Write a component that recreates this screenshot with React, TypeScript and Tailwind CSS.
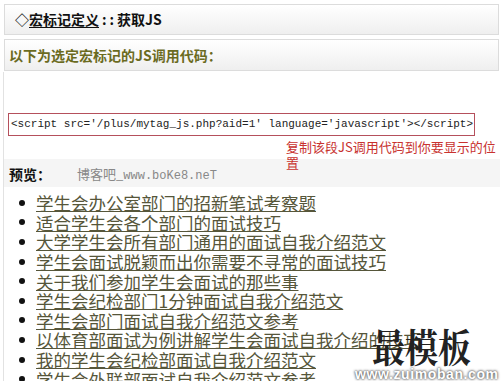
import React from "react";

const items = [
  "学生会办公室部门的招新笔试考察题",
  "适合学生会各个部门的面试技巧",
  "大学学生会所有部门通用的面试自我介绍范文",
  "学生会面试脱颖而出你需要不寻常的面试技巧",
  "关于我们参加学生会面试的那些事",
  "学生会纪检部门1分钟面试自我介绍范文",
  "学生会部门面试自我介绍范文参考",
  "以体育部面试为例讲解学生会面试自我介绍的技巧",
  "我的学生会纪检部面试自我介绍范文",
  "学生会外联部面试自我介绍范文参考",
];

const cjk = { fontFamily: '"Noto Sans CJK SC", "Noto Sans", sans-serif' };

export default function App() {
  return (
    <div className="relative w-[503px] h-[381px] overflow-hidden bg-white" style={cjk}>
      <div className="pt-[4px] px-[3px]">
        <div className="h-[31px] mx-[1px] flex items-center pl-[10px] border border-[#dcdcdc] bg-gradient-to-b from-white to-[#efefef] text-[14px] font-bold text-[#111]">
          <span>◇</span>
          <span className="underline underline-offset-2">宏标记定义</span>
          <span className="ml-[3px] tracking-[3px]">::</span>
          <span>获取JS</span>
        </div>
        <div className="mt-[4px] h-[32px] mx-[1px] flex items-center pl-[4px] border border-[#dcdcdc] bg-gradient-to-b from-white to-[#efefef] text-[14px] font-bold text-[#6b6b1f]">
          以下为选定宏标记的JS调用代码：
        </div>
        <div className="border-l border-[#e2e2e2] mt-[1px]">
          <div className="h-[41px]" />
          <div className="ml-[4px] w-[467px] h-[23px] border border-[#b5505c] flex items-center pl-[2px] text-[11px] text-[#222]" style={{ fontFamily: '"Liberation Mono", monospace' }}>
            {"<script src='/plus/mytag_js.php?aid=1' language='javascript'></script>"}
          </div>
          <div className="relative z-10 pl-[282px] pt-[3px] w-[500px] text-[13px] leading-[16px] text-[#c8322f]">
            复制该段JS调用代码到你要显示的位置
          </div>
          <div className="bg-[#f5f5f5] h-[28px] flex items-center -mt-[12px] pt-[2px]">
            <span className="ml-[5px] text-[14px] font-bold text-[#111]">预览：</span>
            <span className="ml-[26px] text-[13px] text-[#888]">
              博客吧_<span style={{ fontFamily: '"Liberation Mono", monospace' }} className="text-[12px]">www.boKe8.neT</span>
            </span>
          </div>
          <ul className="pt-[6px] pl-[15px]">
            {items.map((t) => (
              <li key={t} className="flex items-center h-[19.6px] text-[17.5px] leading-[19px] text-[#56563a]">
                <span className="w-[6px] h-[6px] rounded-full bg-[#111] mr-[11px] shrink-0" />
                <span className="underline underline-offset-[1px] whitespace-nowrap">{t}</span>
              </li>
            ))}
          </ul>
        </div>
      </div>
      <div className="absolute left-[372px] top-[325px] origin-top scale-y-[1.18] whitespace-nowrap text-[33px] font-bold leading-none text-[#222]" style={{ fontFamily: '"Noto Serif CJK SC", "Noto Sans CJK SC", serif' }}>
        最模板
      </div>
      <div className="absolute left-[355px] top-[367px] whitespace-nowrap text-[14px] font-bold text-white leading-none tracking-[0.6px]" style={{ fontFamily: '"Liberation Sans", sans-serif', textShadow: "0 0 3px #555, 0 0 2px #555" }}>
        www.zuimoban.com
      </div>
    </div>
  );
}
